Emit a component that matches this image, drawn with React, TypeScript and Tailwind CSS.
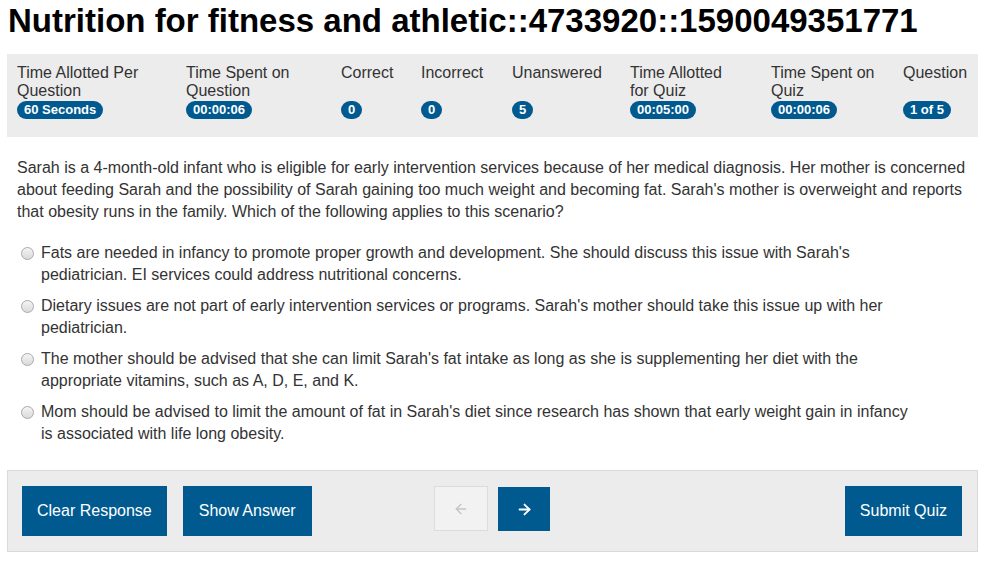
import { ArrowLeft, ArrowRight } from "lucide-react";

const stats = [
  { label: ["Time Allotted Per", "Question"], value: "60 Seconds", w: "w-[169px]" },
  { label: ["Time Spent on", "Question"], value: "00:00:06", w: "w-[155px]" },
  { label: ["Correct"], value: "0", w: "w-[80px]" },
  { label: ["Incorrect"], value: "0", w: "w-[91px]" },
  { label: ["Unanswered"], value: "5", w: "w-[118px]" },
  { label: ["Time Allotted", "for Quiz"], value: "00:05:00", w: "w-[141px]" },
  { label: ["Time Spent on", "Quiz"], value: "00:00:06", w: "w-[132px]" },
  { label: ["Question"], value: "1 of 5", w: "flex-1" },
];

const options = [
  "Fats are needed in infancy to promote proper growth and development. She should discuss this issue with Sarah's pediatrician. EI services could address nutritional concerns.",
  "Dietary issues are not part of early intervention services or programs. Sarah's mother should take this issue up with her pediatrician.",
  "The mother should be advised that she can limit Sarah's fat intake as long as she is supplementing her diet with the appropriate vitamins, such as A, D, E, and K.",
  "Mom should be advised to limit the amount of fat in Sarah's diet since research has shown that early weight gain in infancy is associated with life long obesity.",
];

export default function App() {
  return (
    <div className="min-h-screen bg-white font-['Liberation_Sans',Arial,sans-serif] text-[#333] px-[7px]">
      <h1 className="text-[33px] font-bold leading-[38px] text-black pl-[1px] pt-[2px]">
        Nutrition for fitness and athletic::4733920::1590049351771
      </h1>

      {/* stats bar */}
      <div className="mt-[14px] bg-[#ececec] flex px-[10px] pt-[10px] pb-[18px]">
        {stats.map((s) => (
          <div key={s.value + s.label[0]} className={`${s.w} shrink-0 flex flex-col`}>
            <div className="h-[37px] text-[16px] leading-[18px]">
              {s.label.map((l) => (
                <div key={l}>{l}</div>
              ))}
            </div>
            <div className="flex">
              <span className="bg-[#005a8f] text-white text-[13px] font-bold leading-[18px] h-[18px] px-[7px] rounded-full">
                {s.value}
              </span>
            </div>
          </div>
        ))}
      </div>

      <p className="mt-[20px] px-[10px] text-[16px] leading-[22px]">
        Sarah is a 4-month-old infant who is eligible for early intervention services because of her medical diagnosis. Her mother is concerned about feeding Sarah and the possibility of Sarah gaining too much weight and becoming fat. Sarah's mother is overweight and reports that obesity runs in the family. Which of the following applies to this scenario?
      </p>

      <div className="mt-[19px] flex flex-col gap-[9px] pl-[14px]">
        {options.map((o) => (
          <label key={o} className="flex items-start">
            <span className="mt-[5px] w-[13px] h-[13px] shrink-0 rounded-full border border-[#a9a9a9] bg-gradient-to-b from-[#f4f4f4] to-[#dadada]" />
            <span className="ml-[7px] max-w-[875px] text-[16px] leading-[22px]">{o}</span>
          </label>
        ))}
      </div>

      {/* bottom bar */}
      <div className="mt-[25px] bg-[#ececec] border border-[#d9d9d9] flex items-start pl-[14px] pr-[15px] pt-[15px] pb-[15px]">
        <div className="flex-1 flex gap-[16px]">
          <button className="bg-[#005a8f] text-white text-[16px] h-[50px] px-[15px]">Clear Response</button>
          <button className="bg-[#005a8f] text-white text-[16px] h-[50px] px-[16px]">Show Answer</button>
        </div>
        <div className="flex gap-[10px]">
          <button className="w-[54px] h-[45px] bg-[#f2f2f2] border border-[#dcdcdc] flex items-center justify-center text-[#c4c4c4]">
            <ArrowLeft size={16} strokeWidth={2} />
          </button>
          <button className="w-[52px] h-[44px] mt-[1px] bg-[#005a8f] flex items-center justify-center text-white">
            <ArrowRight size={17} strokeWidth={2.6} />
          </button>
        </div>
        <div className="flex-1 flex justify-end">
          <button className="bg-[#005a8f] text-white text-[16px] h-[50px] px-[15px]">Submit Quiz</button>
        </div>
      </div>
    </div>
  );
}
